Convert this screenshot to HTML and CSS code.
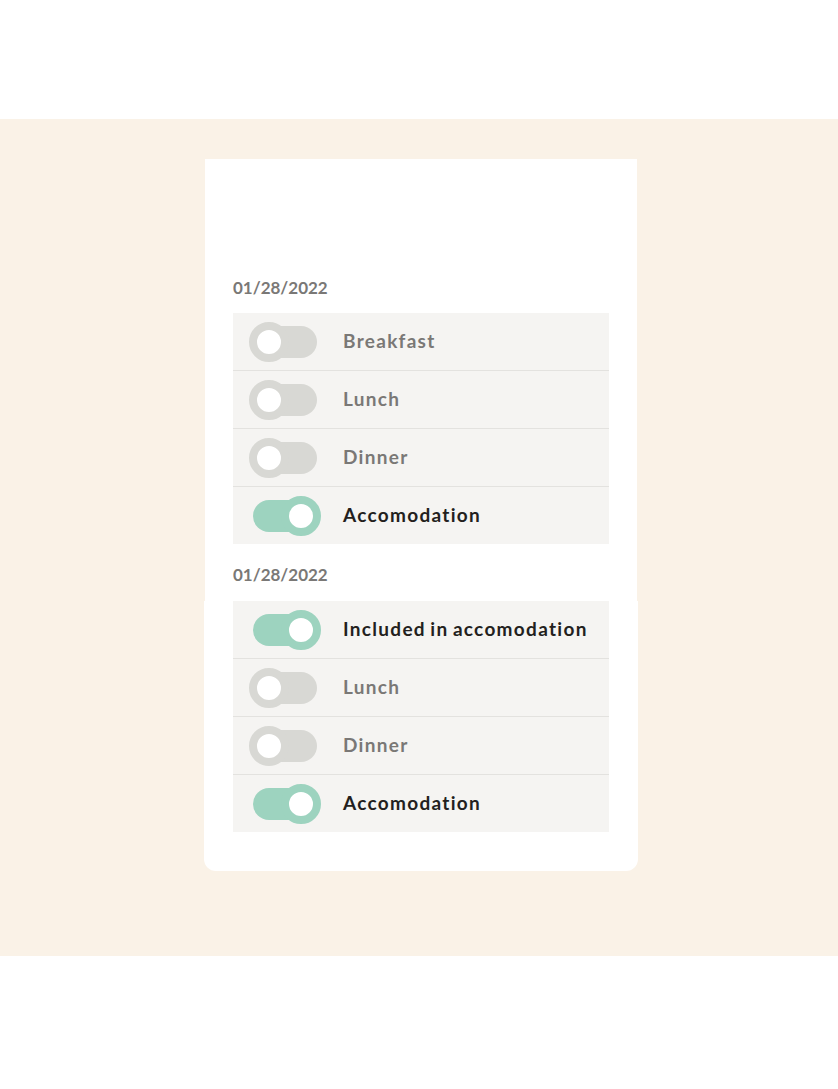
FILE: index.html
```html
<!DOCTYPE html>
<html lang="en">
<head>
<meta charset="utf-8">
<title>Meals</title>
<link rel="stylesheet" href="styles.css">
</head>
<body>
<div class="band">
  <div class="card">
    <div class="card-top">
      <div class="date">01/28/2022</div>
      <ul class="list">
        <li class="row"><span class="toggle"><span class="track"></span><span class="knob"></span></span><span class="label">Breakfast</span></li>
        <li class="row"><span class="toggle"><span class="track"></span><span class="knob"></span></span><span class="label">Lunch</span></li>
        <li class="row"><span class="toggle"><span class="track"></span><span class="knob"></span></span><span class="label">Dinner</span></li>
        <li class="row on"><span class="toggle"><span class="track"></span><span class="knob"></span></span><span class="label">Accomodation</span></li>
      </ul>
      <div class="date second">01/28/2022</div>
    </div>
    <div class="card-bottom">
      <ul class="list">
        <li class="row on"><span class="toggle"><span class="track"></span><span class="knob"></span></span><span class="label">Included in accomodation</span></li>
        <li class="row"><span class="toggle"><span class="track"></span><span class="knob"></span></span><span class="label">Lunch</span></li>
        <li class="row"><span class="toggle"><span class="track"></span><span class="knob"></span></span><span class="label">Dinner</span></li>
        <li class="row on"><span class="toggle"><span class="track"></span><span class="knob"></span></span><span class="label">Accomodation</span></li>
      </ul>
    </div>
  </div>
</div>
</body>
</html>
```

FILE: styles.css
```css
html, body {
  margin: 0;
  padding: 0;
  background: #ffffff;
}
body {
  font-family: Lato, "Open Sans", sans-serif;
  padding-top: 119px;
  height: 1089px;
  box-sizing: border-box;
}
.band {
  background: #faf2e7;
  height: 837px;
  padding-top: 40px;
  box-sizing: border-box;
}
.card {
  width: 434px;
  margin-left: 204px;
}
.card-top {
  background: #ffffff;
  margin: 0 1px;
  padding: 119px 28px 0;
}
.card-bottom {
  background: #ffffff;
  padding: 0 29px 39px;
  border-radius: 0 0 12px 12px;
}
.date {
  font-size: 17px;
  font-weight: 700;
  color: #7a7876;
  line-height: 20px;
  height: 20px;
  margin-bottom: 15px;
  letter-spacing: 0;
}
.date.second {
  margin-top: 21px;
  margin-bottom: 0;
  padding-bottom: 16px;
}
.list {
  list-style: none;
  margin: 0;
  padding: 0;
}
.row {
  display: flex;
  align-items: center;
  height: 57px;
  background: #f5f4f2;
  padding-left: 16px;
  gap: 22px;
}
.row + .row {
  border-top: 1px solid #e3e2df;
}
.toggle {
  position: relative;
  width: 72px;
  height: 40px;
  flex: none;
  display: flex;
  align-items: center;
  justify-content: center;
}
.track {
  width: 64px;
  height: 32px;
  border-radius: 16px;
  background: #d8d8d4;
}
.knob {
  position: absolute;
  top: 0;
  left: 0;
  width: 24px;
  height: 24px;
  border-radius: 50%;
  border: 8px solid #d8d8d4;
  background: #ffffff;
}
.row.on .track {
  background: #9dd3bf;
}
.row.on .knob {
  left: auto;
  right: 0;
  border-color: #9dd3bf;
}
.label {
  font-size: 19px;
  font-weight: 700;
  color: #7a7876;
  letter-spacing: 1.3px;
  word-spacing: -1.5px;
  line-height: 22px;
  padding-bottom: 2px;
}
.row.on .label {
  color: #231f20;
}
```
